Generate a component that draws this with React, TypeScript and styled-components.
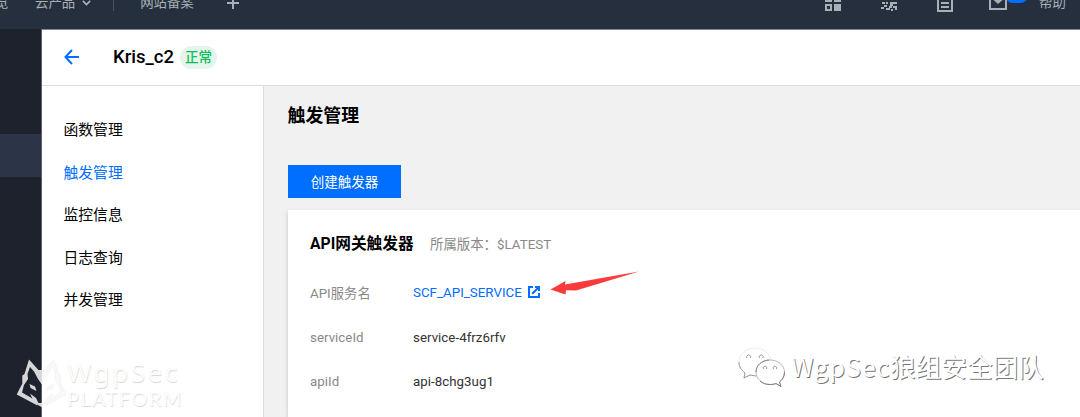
import React from "react";
import styled, { createGlobalStyle } from "styled-components";

const GlobalStyle = createGlobalStyle`
  * { box-sizing: border-box; }
  body {
    margin: 0;
    background: #fff;
    font-family: Roboto, "Noto Sans CJK SC", sans-serif;
    overflow: hidden;
  }
`;

const Page = styled.div`
  display: flex;
  flex-direction: column;
  width: 1080px;
  height: 417px;
  position: relative;
  overflow: hidden;
`;

const TopBar = styled.header`
  flex: none;
  height: 29px;
  display: flex;
  align-items: flex-end;
  overflow: hidden;
  background: #262f3e;
`;

const TopRow = styled.div`
  flex: none;
  width: 100%;
  height: 50px;
  padding-bottom: 3px;
  display: flex;
  align-items: center;
  color: #a9afb6;
  font-size: 13.4px;
  line-height: 20px;
  white-space: nowrap;
`;

const TopItem = styled.div<{ $gap?: number; $w?: number }>`
  flex: none;
  display: flex;
  align-items: center;
  margin-left: ${(p) => p.$gap ?? 0}px;
  width: ${(p) => (p.$w ? `${p.$w}px` : "auto")};
`;

const Divider = styled.i`
  width: 1px;
  height: 16px;
  margin-left: 22px;
  background: #4b5361;
`;

const Spacer = styled.div`
  flex: 1;
`;

const MailItem = styled(TopItem)`
  position: relative;
`;

const Badge = styled.i`
  position: absolute;
  left: 16px;
  top: -7px;
  width: 23px;
  height: 15px;
  border-radius: 8px;
  background: #006eff;
`;

const Body = styled.div`
  flex: 1;
  display: flex;
  min-height: 0;
`;

const Rail = styled.nav`
  flex: none;
  width: 42px;
  padding-top: 105px;
  background: #1e222c;
  border-right: 1px solid #5d6068;
`;

const RailActive = styled.div`
  height: 43px;
  background: #2c3547;
`;

const Main = styled.main`
  flex: 1;
  display: flex;
  flex-direction: column;
  border-top: 1px solid #82869a;
`;

const TitleBar = styled.div`
  flex: none;
  height: 56px;
  display: flex;
  align-items: center;
  padding: 0 0 1px 22px;
  border-bottom: 1px solid #dcdcdc;
`;

const FunctionName = styled.h1`
  margin: 0 0 0 33px;
  font-size: 18.5px;
  font-weight: 500;
  line-height: 24px;
  color: #000;
`;

const Status = styled.span`
  margin-left: 6px;
  height: 23px;
  width: 37px;
  border-radius: 12px;
  background: #e6f5eb;
  color: #0abf5b;
  font-size: 13.5px;
  font-weight: 500;
  line-height: 23px;
  text-align: center;
`;

const Columns = styled.div`
  flex: 1;
  display: flex;
`;

const Side = styled.aside`
  flex: none;
  width: 222px;
  padding: 23px 0 0 21.5px;
  border-right: 1px solid #dcdcdc;
`;

const SideItem = styled.div<{ $active?: boolean }>`
  height: 42.6px;
  line-height: 43px;
  font-size: 14.8px;
  color: ${(p) => (p.$active ? "#006eff" : "#000")};
`;

const Content = styled.section`
  flex: 1;
  display: flex;
  flex-direction: column;
  align-items: stretch;
  padding: 17px 0 0 24px;
  background: #f1f1f1;
`;

const Heading = styled.h2`
  margin: 0 0 0 -0.5px;
  font-size: 17.9px;
  line-height: 26px;
  font-weight: 700;
  color: #000;
`;

const CreateButton = styled.button`
  align-self: flex-start;
  margin: 36px 0 12px;
  width: 113px;
  height: 33px;
  padding: 2px 0 0;
  border: 0;
  background: #006eff;
  color: #fff;
  font: 13.5px/31px Roboto, "Noto Sans CJK SC", sans-serif;
`;

const Card = styled.article`
  flex: 1;
  padding: 22px 22px 0;
  background: #fff;
  box-shadow: 0 2px 4px rgba(0, 0, 0, 0.2);
`;

const CardTitle = styled.div`
  display: flex;
  align-items: center;
  height: 24px;
  margin-bottom: 14px;
`;

const CardName = styled.h3`
  margin: 0;
  width: 120px;
  font-size: 15.7px;
  font-weight: 700;
  line-height: 24px;
  color: #000;
  white-space: nowrap;
`;

const Version = styled.span`
  font-size: 13.4px;
  line-height: 24px;
  color: #888;
  padding-top: 1px;
`;

const Field = styled.div`
  display: flex;
  align-items: center;
  height: 44.8px;
  font-size: 13.3px;
  letter-spacing: 0.03px;
`;

const Label = styled.span`
  width: 103px;
  color: #888;
`;

const Value = styled.span<{ $link?: boolean }>`
  display: flex;
  align-items: center;
  gap: 6px;
  color: ${(p) => (p.$link ? "#006eff" : "#333")};
`;

const Pointer = styled.svg`
  position: absolute;
  left: 548px;
  top: 268px;
`;

const PlatformMark = styled.div`
  position: absolute;
  left: 16px;
  top: 358px;
  display: flex;
  gap: 1px;
`;

const PlatformText = styled.div`
  font-family: Lato, sans-serif;
  color: #fdfdfd;
  text-shadow: 0.5px 1px 1px #d6d6d6;
  white-space: nowrap;
`;

const PlatformTop = styled.div`
  font-family: "Noto Sans", sans-serif;
  font-size: 26px;
  line-height: 29px;
  letter-spacing: 2.6px;
`;

const PlatformSub = styled.div`
  font-size: 20px;
  line-height: 23px;
  letter-spacing: 1.4px;
`;

const TeamMark = styled.div`
  position: absolute;
  left: 737px;
  top: 345px;
  display: flex;
  align-items: flex-start;
  gap: 5px;
`;

const TeamText = styled.span`
  font-family: "Noto Sans CJK SC", sans-serif;
  font-size: 25.6px;
  line-height: 41px;
  color: #fff;
  text-shadow: 1px 1px 0.5px #777;
  white-space: nowrap;
`;

const TeamLatin = styled.span`
  letter-spacing: 0.7px;
`;

const GridIcon = () => (
  <svg width="16" height="16" viewBox="0 0 16 16" fill="none" stroke="currentColor" strokeWidth="2">
    <path d="M1 1h5v5H1zM10 1h5v5h-5zM1 10h5v5H1z" />
    <path d="M9 9h7v7H9z" fill="currentColor" stroke="none" />
  </svg>
);

const ToolsIcon = () => (
  <svg width="16" height="16" viewBox="0 0 16 16" fill="currentColor">
    <path d="M0 0h7v2H0zM9 0h7v5H9zM1 7h3v2H1zM5 7h2v2H5zM9 7h7v2h-4v2H9zM3 10h3v2H3zM0 12h3v2H0zM5 13h3v-2h3v2H9v2H5zM12 11h4v4h-2v-2h-2zM10 14h2v2h-2z" />
  </svg>
);

const DocIcon = () => (
  <svg width="16" height="18" viewBox="0 0 16 18" fill="none" stroke="currentColor" strokeWidth="2">
    <path d="M1 1h14v16H1zM4 5h8M4 9h8M4 13h8" />
  </svg>
);

const MailIcon = () => (
  <svg width="18" height="16" viewBox="0 0 18 16" fill="none" stroke="currentColor" strokeWidth="2">
    <path d="M1 1h16v13H1z" />
    <path d="M4.500 5l4.500 4 4.500-4z" fill="currentColor" stroke="none" />
  </svg>
);

const ChevronIcon = () => (
  <svg width="9" height="6" viewBox="0 0 9 6" fill="none" stroke="currentColor" strokeWidth="1.7">
    <path d="M.8.8l3.700 3.700L8.200.8" />
  </svg>
);

const PlusIcon = () => (
  <svg width="12" height="12" viewBox="0 0 12 12" fill="none" stroke="currentColor" strokeWidth="2">
    <path d="M6 0v12M0 6h12" />
  </svg>
);

const BackIcon = () => (
  <svg width="16" height="16" viewBox="0 0 16 16" fill="none" stroke="#006eff" strokeWidth="2">
    <path d="M8 1L1.500 8 8 15M1.500 8H15" />
  </svg>
);

const ExternalIcon = () => (
  <svg width="12" height="12" viewBox="0 0 12 12" fill="none" stroke="#006eff" strokeWidth="2">
    <path d="M5 1H1v10h10V7" />
    <path d="M4.200 7.800L10 2" />
    <path d="M7 1h4v4" />
  </svg>
);

const WolfHalf = () => (
  <>
    <path
      fillRule="evenodd"
      d="M13 1.500L22.500 12H25.500V26L22 21 18 13.500 14 9 11.500 16 12 21 8 27 6 34.500 19 42 21.500 47.500 .7 36.500 6.300 25.500V17.500L8.500 16z"
    />
    <path d="M13.500 26L19 28.500 20.500 33 14.500 30zM14 35.500L20 40 22.500 45H25.500V49L21 46.500 17 42z" />
  </>
);

const WolfIcon = () => (
  <svg width="50" height="50" viewBox="0 0 50 50">
    <g fill="#d6d5d7">
      <WolfHalf />
    </g>
    <g fill="#f8f8f8" stroke="#ececec" strokeWidth=".5" transform="matrix(-1 0 0 1 51 0)">
      <WolfHalf />
    </g>
  </svg>
);

const ChatIcon = () => (
  <svg width="49" height="44" viewBox="0 0 49 44">
    <g fill="#fff" strokeLinejoin="round">
      <path
        d="M18 3C9 3 2 9 2 17c0 5 2.500 8 6 11l-1.500 5 6-3c2 .7 5 1 8 1C30 31 34 25 34 18 34 9 27 3 18 3z"
        stroke="#e6e6e6"
        strokeWidth=".8"
      />
      <path d="M2 17c0 5 2.500 8 6 11l-1 5 6-3 6 1" fill="none" stroke="#999" />
      <path
        d="M33 15c-8 0-14 5.500-14 12s6 12.500 14 12.500c2.500 0 4.500-.4 6-1l5 3-1.500-4.500c3-2.500 5-5.500 5-10C47.500 20.500 41 15 33 15z"
        stroke="#b8b8b8"
      />
      <path d="M32 15c-7.500 .5-13 5.500-13 12" fill="none" stroke="#888" />
      <path d="M23 36c3 2.500 6 3.500 10 3.500 2.500 0 4.500-.4 6-1l5 3-1.500-4.500c3-2.500 5-5.500 5-10" fill="none" stroke="#808080" />
    </g>
    <g fill="none" stroke="#999">
      <path d="M10 13a2 2 0 1 1 3.400 0M22.500 13a2 2 0 1 1 3.400 0M26.500 24a1.800 1.800 0 1 1 3 0M36.500 24a1.800 1.800 0 1 1 3 0" />
    </g>
  </svg>
);

const menu = ["函数管理", "触发管理", "监控信息", "日志查询", "并发管理"];

export default function App() {
  return (
    <Page>
      <GlobalStyle />
      <TopBar>
        <TopRow>
          <TopItem $gap={-5} $w={13}>览</TopItem>
          <TopItem $gap={27}>云产品</TopItem>
          <TopItem $gap={7}><ChevronIcon /></TopItem>
          <Divider />
          <TopItem $gap={26}>网站备案</TopItem>
          <TopItem $gap={33}><PlusIcon /></TopItem>
          <Spacer />
          <TopItem><GridIcon /></TopItem>
          <TopItem $gap={40}><ToolsIcon /></TopItem>
          <TopItem $gap={40}><DocIcon /></TopItem>
          <MailItem $gap={36}><MailIcon /><Badge /></MailItem>
          <TopItem $gap={32} $w={41}>帮助</TopItem>
        </TopRow>
      </TopBar>
      <Body>
        <Rail><RailActive /></Rail>
        <Main>
          <TitleBar>
            <BackIcon />
            <FunctionName>Kris_c2</FunctionName>
            <Status>正常</Status>
          </TitleBar>
          <Columns>
            <Side>
              {menu.map((m) => (
                <SideItem key={m} $active={m === "触发管理"}>{m}</SideItem>
              ))}
            </Side>
            <Content>
              <Heading>触发管理</Heading>
              <CreateButton>创建触发器</CreateButton>
              <Card>
                <CardTitle>
                  <CardName>API网关触发器</CardName>
                  <Version>所属版本：$LATEST</Version>
                </CardTitle>
                <Field>
                  <Label>API服务名</Label>
                  <Value $link>SCF_API_SERVICE <ExternalIcon /></Value>
                </Field>
                <Field>
                  <Label>serviceId</Label>
                  <Value>service-4frz6rfv</Value>
                </Field>
                <Field>
                  <Label>apiId</Label>
                  <Value>api-8chg3ug1</Value>
                </Field>
              </Card>
            </Content>
          </Columns>
        </Main>
      </Body>
      <Pointer width="94" height="30" viewBox="0 0 94 30">
        <path d="M2.500 21.500L17.500 13l-.5 3.500L91 3.500 28 22.500l-10-.3-.5 4.300z" fill="#fb3b3b" />
      </Pointer>
      <PlatformMark>
        <WolfIcon />
        <PlatformText>
          <PlatformTop>WgpSec</PlatformTop>
          <PlatformSub>PLATFORM</PlatformSub>
        </PlatformText>
      </PlatformMark>
      <TeamMark>
        <ChatIcon />
        <TeamText><TeamLatin>WgpSec</TeamLatin>狼组安全团队</TeamText>
      </TeamMark>
    </Page>
  );
}
